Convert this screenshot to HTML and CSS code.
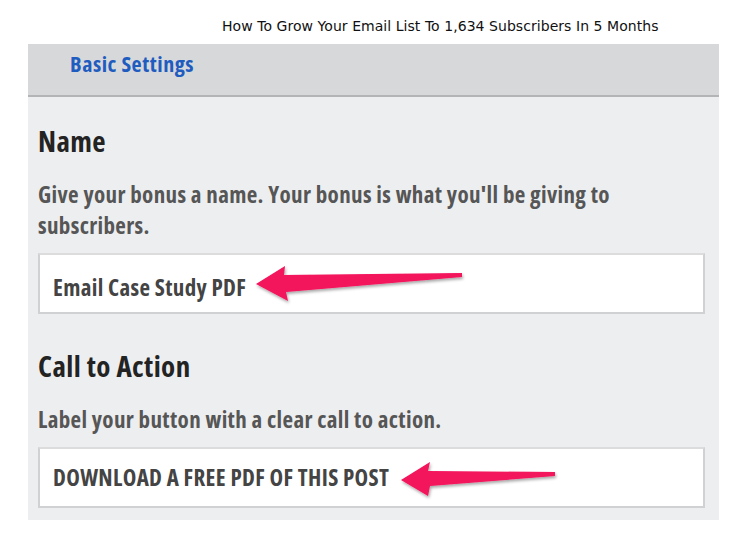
FILE: index.html
```html
<!DOCTYPE html>
<html>
<head>
<meta charset="utf-8">
<link rel="stylesheet" href="styles.css">
</head>
<body>
<div class="caption">How To Grow Your Email List To 1,634 Subscribers In 5 Months</div>
<div class="panel">
  <div class="panel-head">Basic Settings</div>
  <div class="panel-body">
    <h2 class="field-title">Name</h2>
    <p class="field-desc">Give your bonus a name. Your bonus is what you'll be giving to subscribers.</p>
    <div class="field-input field-name">
      <span class="field-value">Email Case Study PDF</span>
      <svg class="arrow arrow-one" width="220" height="50" viewBox="0 0 220 50">
        <polygon points="8,27 37,9 36,18 214,16 214,20 38,35 40,44" fill="#f4135c" filter="url(#sh1)"/>
        <defs><filter id="sh1" x="-10%" y="-30%" width="120%" height="180%"><feDropShadow dx="1" dy="2" stdDeviation="1.5" flood-color="#000" flood-opacity="0.35"/></filter></defs>
      </svg>
    </div>
    <h2 class="field-title cta-title">Call to Action</h2>
    <p class="field-desc">Label your button with a clear call to action.</p>
    <div class="field-input">
      <span class="field-value">DOWNLOAD A FREE PDF OF THIS POST</span>
      <svg class="arrow arrow-two" width="170" height="50" viewBox="0 0 170 50">
        <polygon points="8,29 37,11 35,20 162,21 162,25 37,35 35,45" fill="#f4135c" filter="url(#sh2)"/>
        <defs><filter id="sh2" x="-10%" y="-30%" width="120%" height="180%"><feDropShadow dx="1" dy="2" stdDeviation="1.5" flood-color="#000" flood-opacity="0.35"/></filter></defs>
      </svg>
    </div>
  </div>
</div>
</body>
</html>
```
FILE: styles.css
```css
html, body {
  margin: 0;
  padding: 0;
  background: #ffffff;
}
body {
  width: 746px;
  height: 539px;
  overflow: hidden;
}
.caption {
  font-family: "DejaVu Sans", sans-serif;
  font-size: 14px;
  color: #111;
  padding-left: 222px;
  height: 19px;
  padding-top: 17px;
  line-height: 19px;
  margin-bottom: 8px;
  letter-spacing: 0.05px;
}
.panel {
  margin-left: 28px;
  width: 691px;
  height: 476px;
  background: #edeef0;
  font-family: "Open Sans", sans-serif;
  font-stretch: 75%;
  font-weight: 700;
}
.panel-head {
  height: 51px;
  background: #d7d8da;
  border-bottom: 2px solid #b3b4b6;
  color: #1f5cc0;
  font-size: 22px;
  line-height: 38px;
  padding-left: 42px;
  letter-spacing: 0.55px;
}
.panel-body {
  padding: 0 14px 0 10px;
}
.field-title {
  margin: 0;
  font-size: 29px;
  font-weight: 700;
  color: #232323;
  line-height: 40px;
  padding-top: 24px;
  letter-spacing: 0.4px;
}
.cta-title {
  padding-top: 32px;
}
.field-desc {
  margin: 0;
  padding-top: 18px;
  font-size: 23px;
  line-height: 31px;
  color: #565656;
  max-width: 620px;
  letter-spacing: 0.35px;
}
.field-input {
  position: relative;
  margin-top: 12px;
  background: #fff;
  border: 2px solid #d0d1d3;
  border-top-color: #dcdcdc;
  box-sizing: border-box;
  height: 61px;
  padding-left: 13px;
}
.field-value {
  font-size: 23px;
  color: #444;
  line-height: 57px;
  letter-spacing: 0.34px;
}
.field-name .field-value {
  display: inline-block;
  padding-top: 7px;
  line-height: 50px;
}
.arrow {
  position: absolute;
}
.arrow-one {
  left: 208px;
  top: 2px;
}
.arrow-two {
  left: 353px;
  top: 2px;
}
```
